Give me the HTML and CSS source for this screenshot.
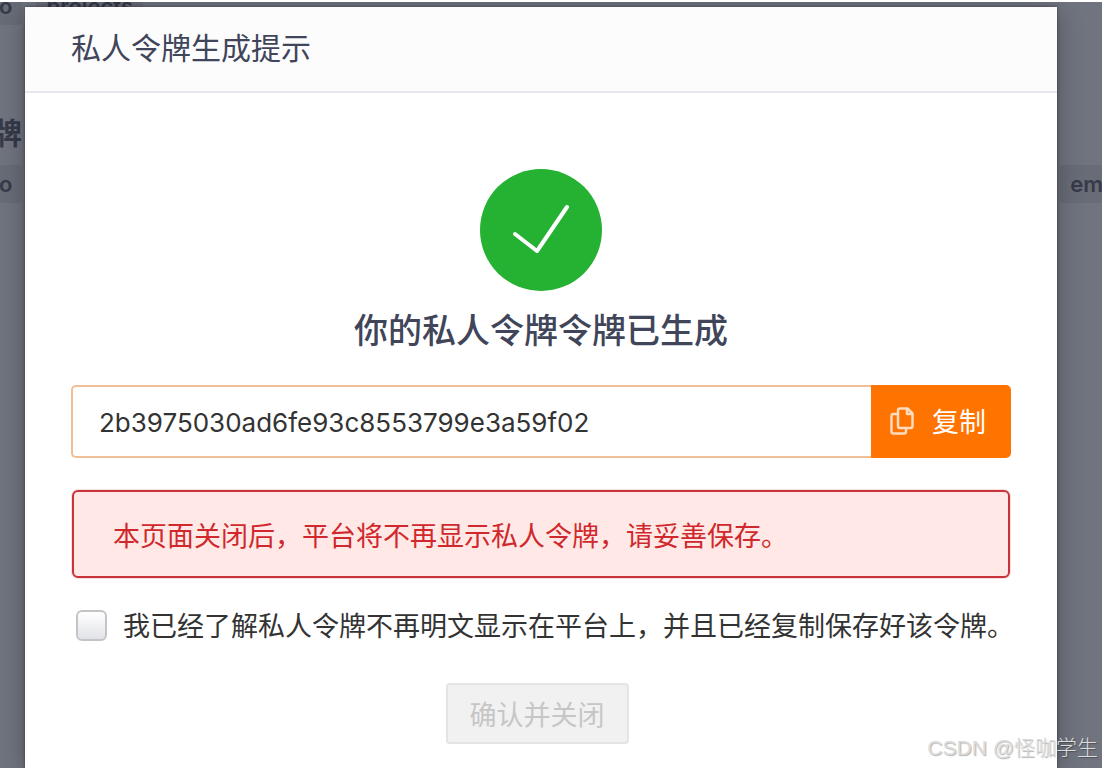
FILE: index.html
```html
<!DOCTYPE html>
<html lang="zh-CN">
<head>
  <meta charset="UTF-8">
  <meta name="viewport" content="width=device-width, initial-scale=1.0">
  <title>私人令牌生成提示</title>
  <link rel="stylesheet" href="styles.css">
</head>
<body>
  <div class="page">
    <div class="behind">
      <div class="scopes scopes-top">
        <span class="scope scope-first">o</span>
        <span class="scope">projects</span>
      </div>
      <h1>牌</h1>
      <div class="scopes">
        <span class="scope scope-first">o</span>
        <span class="scope scope-last">em</span>
      </div>
    </div>

    <div class="modal" role="dialog" aria-labelledby="modal-title">
      <div class="modal-header">
        <h2 id="modal-title">私人令牌生成提示</h2>
      </div>
      <div class="modal-body">
        <svg class="success-icon" viewBox="0 0 122 122" aria-hidden="true">
          <circle cx="61" cy="61" r="61" fill="#25b131"/>
          <path d="M35 65 L57 82 L87 38" fill="none" stroke="#fff" stroke-width="4" stroke-linecap="round" stroke-linejoin="round"/>
        </svg>
        <h3>你的私人令牌令牌已生成</h3>

        <div class="token-row">
          <input type="text" id="token" aria-label="私人令牌" value="2b3975030ad6fe93c8553799e3a59f02" readonly>
          <button type="button" id="copy" class="btn-copy">
            <svg viewBox="0 0 24 28" aria-hidden="true">
              <path d="M10 1.500h7.500l5 5V19a2 2 0 0 1-2 2H10a2 2 0 0 1-2-2V3.500a2 2 0 0 1 2-2z"/>
              <path d="M17 2v5h5"/>
              <path d="M8 7H3.500a2 2 0 0 0-2 2v15.500a2 2 0 0 0 2 2H14a2 2 0 0 0 2-2V21"/>
            </svg>
            复制
          </button>
        </div>

        <p class="warning">本页面关闭后，平台将不再显示私人令牌，请妥善保存。</p>

        <div class="confirm">
          <input type="checkbox" id="agree">
          <label for="agree">我已经了解私人令牌不再明文显示在平台上，并且已经复制保存好该令牌。</label>
        </div>

        <button type="button" id="close" class="btn-close" disabled>确认并关闭</button>
      </div>
    </div>

    <div class="watermark">CSDN @怪咖学生</div>
  </div>
</body>
</html>
```

FILE: styles.css
```css
* {
  box-sizing: border-box;
}
body {
  margin: 0;
  font-family: Inter, "Noto Sans CJK SC", sans-serif;
  color: #333;
}
h1, h2, h3, p {
  margin: 0;
}
.page {
  position: relative;
  display: flex;
  min-height: 100vh;
  padding: 5px 45px 0 25px;
  border-top: 2px solid #fff;
  background: #70747f;
  overflow: hidden;
}

/* dimmed page under the dialog */
.behind {
  position: absolute;
  inset: 0;
  color: #363a49;
}
.behind h1 {
  height: 140px;
  padding-top: 86px;
  margin-left: -8px;
  font-size: 30px;
  line-height: 44px;
}
.scopes {
  display: flex;
  justify-content: space-between;
}
.scopes-top {
  height: 23px;
  justify-content: flex-start;
  align-items: flex-end;
  gap: 14px;
}
.scope {
  height: 38px;
  padding: 0 10px;
  border-radius: 4px;
  background: #686c77;
  font-size: 22px;
  font-weight: 600;
  line-height: 38px;
}
.scope-first {
  padding-left: 0;
  margin-left: -1px;
}
.scope-last {
  padding-right: 0;
  margin-right: -1px;
}

.modal {
  position: relative;
  flex: 1;
  min-width: 0;
  background: #fff;
  box-shadow: 0 4px 24px rgba(0, 0, 0, 0.3), 0 0 3px rgba(0, 0, 0, 0.4);
}
.modal-header {
  padding: 19px 46px 21px;
  border-bottom: 2px solid #e6e6ec;
  background: #fcfcfc;
}
.modal-header h2 {
  color: #40455a;
  font-size: 30px;
  font-weight: 400;
  line-height: 44px;
}
.modal-body {
  display: flex;
  flex-direction: column;
  align-items: center;
  padding: 76px 46px 24px;
}
.success-icon {
  width: 122px;
  height: 122px;
}
h3 {
  margin: 14px 0 28px;
  color: #40455a;
  font-size: 34px;
  font-weight: 500;
  line-height: 52px;
}
.token-row {
  display: flex;
  width: 100%;
  height: 73px;
}
.token-row input {
  flex: 1;
  min-width: 0;
  padding: 2px 26px 0;
  border: 2px solid #f0bf96;
  border-right: 0;
  border-radius: 5px 0 0 5px;
  background: #fff;
  color: #333;
  font-family: inherit;
  font-size: 26px;
  outline: none;
}
.btn-copy {
  display: flex;
  align-items: center;
  justify-content: center;
  gap: 18px;
  width: 140px;
  padding: 0 6px 2px 0;
  border: 0;
  border-radius: 0 5px 5px 0;
  background: #ff7300;
  color: #fff;
  font-family: inherit;
  font-size: 27px;
}
.btn-copy svg {
  width: 24px;
  height: 28px;
  fill: none;
  stroke: #ffdcc0;
  stroke-width: 2.5;
  stroke-linejoin: round;
}
.warning {
  align-self: stretch;
  margin: 32px 1px 0;
  padding: 23px 39px 17px;
  border: 2px solid #c9333a;
  border-radius: 6px;
  background: #ffe8e6;
  box-shadow: 0 0 0 1px #f5dfe1;
  color: #d0282c;
  font-size: 27px;
  line-height: 44px;
}
.confirm {
  display: flex;
  align-items: center;
  align-self: stretch;
  gap: 16px;
  margin: 24px 0 34px;
  padding-left: 5px;
}
.confirm input {
  appearance: none;
  flex: none;
  width: 31px;
  height: 31px;
  margin: 0;
  border: 2px solid #c3c3c8;
  border-radius: 6px;
  background: linear-gradient(#fff, #e2e3e8);
}
.confirm label {
  padding-top: 3px;
  font-size: 27px;
  line-height: 44px;
  white-space: nowrap;
}
.btn-close {
  width: 183px;
  height: 61px;
  margin-right: 8px;
  padding: 0;
  border: 2px solid #e4e4e4;
  border-radius: 4px;
  background: #f1f1f1;
  color: #c6c6c6;
  font-family: inherit;
  font-size: 27px;
}

.watermark {
  position: absolute;
  right: 4px;
  bottom: 4px;
  color: #dcdcdc;
  font-family: "Liberation Sans", "Noto Sans CJK SC", sans-serif;
  font-size: 21px;
  font-weight: 300;
  line-height: 32px;
  text-shadow: 1px 1px 1px rgba(0, 0, 0, 0.3);
}
```
